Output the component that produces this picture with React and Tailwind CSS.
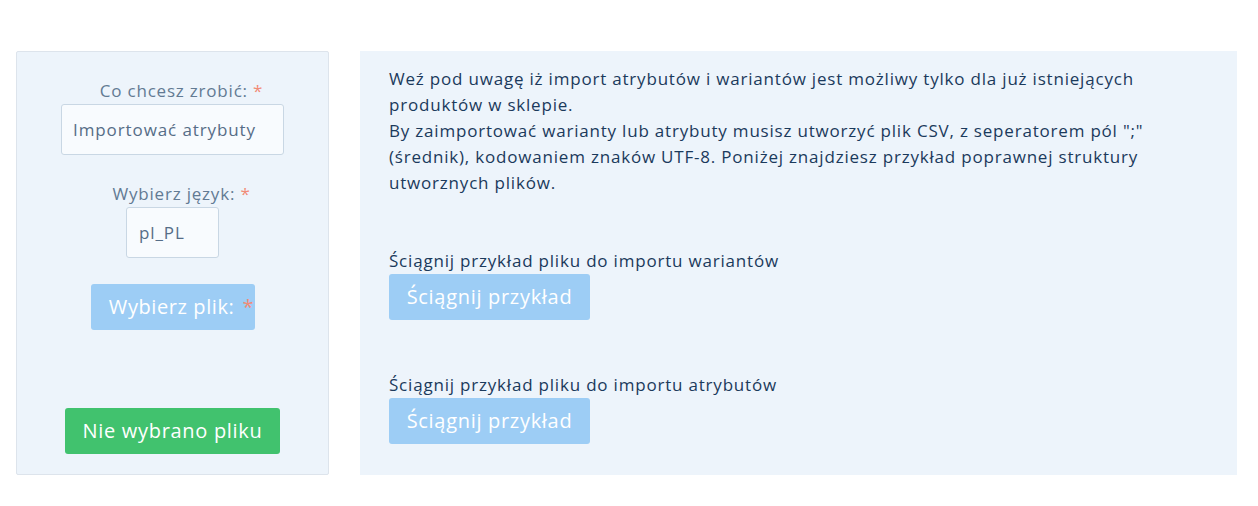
export default function App() {
  const font = { fontFamily: '"Open Sans", "Noto Sans", sans-serif' };
  return (
    <div className="w-[1258px] h-[506px] bg-white pt-[51px] pl-[16px] flex gap-[31px]" style={font}>
      <div className="w-[313px] h-[424px] bg-[#edf4fb] border border-[#dde4ec] rounded-[2px] flex flex-col items-center">
        <div className="mt-[27px] ml-[18px] text-[17px] leading-[24px] tracking-[0.8px] text-[#627a93] whitespace-nowrap">
          Co chcesz zrobić: <span className="text-[#f28b76]">*</span>
        </div>
        <div className="mt-[1px] w-[223px] h-[51px] bg-[#f8fbfe] border border-[#c9d7e4] rounded-[3px] flex items-center pl-[11px] text-[17px] tracking-[0.9px] text-[#566d87] whitespace-nowrap">
          Importować atrybuty
        </div>
        <div className="mt-[27px] ml-[18px] text-[17px] leading-[24px] tracking-[0.8px] text-[#627a93] whitespace-nowrap">
          Wybierz język: <span className="text-[#f28b76]">*</span>
        </div>
        <div className="mt-[1px] w-[93px] h-[51px] bg-[#f8fbfe] border border-[#c9d7e4] rounded-[3px] flex items-center pl-[12px] text-[17px] tracking-[0.9px] text-[#566d87]">
          pl_PL
        </div>
        <div className="mt-[26px] w-[164px] h-[46px] bg-[#9dcdf5] rounded-[3px] flex items-center justify-end pr-[1px] text-[20px] tracking-[0.6px] text-white whitespace-nowrap">
          Wybierz plik:<span className="text-[#f28b76] ml-[8px] tracking-normal">*</span>
        </div>
        <div className="mt-[78px] w-[215px] h-[46px] bg-[#41c26e] rounded-[3px] flex items-center justify-center text-[20px] tracking-[0.7px] text-white whitespace-nowrap">
          Nie wybrano pliku
        </div>
      </div>
      <div className="w-[877px] h-[424px] bg-[#edf4fb] pl-[29px] pt-[15px] text-[#1b3a5c] text-[17px] tracking-[0.8px]">
        <p className="leading-[26px] whitespace-nowrap">
          Weź pod uwagę iż import atrybutów i wariantów jest możliwy tylko dla już istniejących
          <br />
          produktów w sklepie.
          <br />
          By zaimportować warianty lub atrybuty musisz utworzyć plik CSV, z seperatorem pól ";"
          <br />
          (średnik), kodowaniem znaków UTF-8. Poniżej znajdziesz przykład poprawnej struktury
          <br />
          utworznych plików.
        </p>
        <div className="mt-[52px] leading-[26px] whitespace-nowrap">Ściągnij przykład pliku do importu wariantów</div>
        <div className="w-[201px] h-[46px] bg-[#9dcdf5] rounded-[3px] flex items-center justify-center text-[20px] tracking-[0.7px] text-white whitespace-nowrap">
          Ściągnij przykład
        </div>
        <div className="mt-[52px] leading-[26px] whitespace-nowrap">Ściągnij przykład pliku do importu atrybutów</div>
        <div className="w-[201px] h-[46px] bg-[#9dcdf5] rounded-[3px] flex items-center justify-center text-[20px] tracking-[0.7px] text-white whitespace-nowrap">
          Ściągnij przykład
        </div>
      </div>
    </div>
  );
}
